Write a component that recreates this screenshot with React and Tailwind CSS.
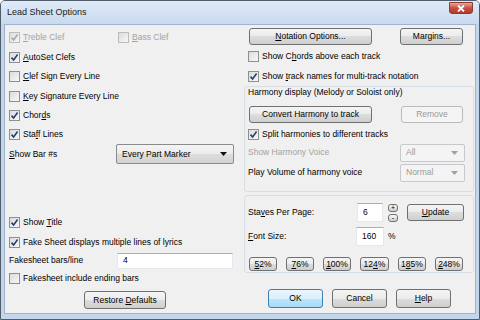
import React from "react";

const font = { fontFamily: '"Liberation Sans", Arial, sans-serif' };

const U = ({ children }) => <span className="underline underline-offset-[1px]">{children}</span>;

const Check = ({ checked, disabled }) => (
  <span
    className={`w-[11px] h-[11px] shrink-0 border flex items-center justify-center bg-[linear-gradient(135deg,#dcdcdc,#f7f7f7)] ${
      disabled ? "border-[#bcbcbc]" : "border-[#8e8f8f]"
    }`}
  >
    {checked && (
      <svg width="9" height="9" viewBox="0 0 9 9">
        <path
          d="M1.5 4.6 L3.6 7 L7.6 1.6"
          fill="none"
          stroke={disabled ? "#a9a9a9" : "#23406d"}
          strokeWidth="1.6"
        />
      </svg>
    )}
  </span>
);

const CheckRow = ({ checked, disabled, children, h = "h-[20px]", className = "" }) => (
  <div className={`flex items-center gap-[3px] ${h} ${className}`}>
    <Check checked={checked} disabled={disabled} />
    <span className={disabled ? "text-[#a3a3a3]" : "text-black"}>{children}</span>
  </div>
);

const Btn = ({ children, className = "", disabled, primary }) => (
  <div
    className={`flex items-center justify-center rounded-[3px] border ${
      disabled
        ? "border-[#b8bcbf] bg-[#f4f4f4] text-[#9a9a9a]"
        : primary
        ? "border-[#3c7fb1] bg-[linear-gradient(#eaf6fd,#d9f0fc_50%,#bee6fd_50%,#a7d9f5)] text-black"
        : "border-[#707070] bg-[linear-gradient(#f4f4f4,#ebebeb_50%,#dddddd_50%,#cfcfcf)] text-black"
    } ${className}`}
  >
    <span>{children}</span>
  </div>
);

const Arrow = ({ color }) => (
  <svg width="7" height="4" viewBox="0 0 7 4">
    <path d="M0 0 L7 0 L3.5 4 Z" fill={color} />
  </svg>
);

const Combo = ({ value, disabled, className = "" }) => (
  <div
    className={`flex items-center justify-between pl-[5px] pr-[6px] rounded-[2px] border ${
      disabled
        ? "border-[#c5c9cc] bg-[#f4f4f4] text-[#9a9a9a]"
        : "border-[#8a8a8a] bg-[linear-gradient(#f4f4f4,#ebebeb_50%,#dddddd_50%,#d3d3d3)] text-black"
    } ${className}`}
  >
    <span>{value}</span>
    <Arrow color={disabled ? "#a0a0a0" : "#111"} />
  </div>
);

const Input = ({ value, className = "" }) => (
  <div
    className={`flex items-center pl-[5px] bg-white border border-[#e3e9ef] border-t-[#abadb3] ${className}`}
  >
    {value}
  </div>
);

export default function App() {
  return (
    <div style={font} className="w-[480px] h-[320px] flex flex-col text-[8.5px] leading-none bg-[#c3d6ec] border border-[#4e5c6b] rounded-t-[5px] overflow-hidden">
      {/* Title bar */}
      <div className="h-[23px] shrink-0 flex items-center justify-between pl-[6px] pr-[6px] bg-[linear-gradient(#e0ebf7,#c8daef)]">
        <span className="text-[9px] text-[#1a1a1a] font-medium">Lead Sheet Options</span>
        <div className="w-[24px] h-[12px] -mt-[9px] rounded-b-[3px] border border-[#8a3b34] bg-[linear-gradient(#e5a79d,#c9503f_50%,#b83a26)] flex items-center justify-center">
          <svg width="8" height="7" viewBox="0 0 8 7">
            <path d="M1 0.5 L7 6.5 M7 0.5 L1 6.5" stroke="#fff" strokeWidth="1.8" />
          </svg>
        </div>
      </div>

      {/* Body */}
      <div className="flex-1 flex mx-[3px] mb-[5px] bg-[#f0f0f0] border border-[#9fb3ca]">
        {/* Left column */}
        <div className="w-[236px] shrink-0 flex flex-col pl-[4px] pt-[2px]">
          <div className="flex items-center h-[20px]">
            <CheckRow checked disabled className="w-[109px]">
              <U>T</U>reble Clef
            </CheckRow>
            <CheckRow disabled>
              <U>B</U>ass Clef
            </CheckRow>
          </div>
          <CheckRow checked>
            <U>A</U>utoSet Clefs
          </CheckRow>
          <CheckRow h="h-[19px]">
            <U>C</U>lef Sign Every Line
          </CheckRow>
          <CheckRow>
            <U>K</U>ey Signature Every Line
          </CheckRow>
          <CheckRow checked h="h-[19px]">
            Chor<U>d</U>s
          </CheckRow>
          <CheckRow checked h="h-[19px]">
            Sta<U>f</U>f Lines
          </CheckRow>
          <div className="flex items-center h-[20px]">
            <span className="w-[107px]">
              <U>S</U>how Bar #s
            </span>
            <Combo value="Every Part Marker" className="w-[118px] h-[20px]" />
          </div>
          <div className="h-[48px]" />
          <CheckRow checked>
            Show <U>T</U>itle
          </CheckRow>
          <CheckRow checked>Fake Sheet displays multiple lines of lyrics</CheckRow>
          <div className="flex items-center h-[17px]">
            <span className="w-[108px]">Fakesheet bars/line</span>
            <Input value="4" className="w-[116px] h-[16px]" />
          </div>
          <CheckRow h="h-[19px]">Fakesheet include ending bars</CheckRow>
          <Btn className="ml-[75px] mt-[3px] w-[82px] h-[18px]">
            Restore <U>D</U>efaults
          </Btn>
        </div>

        {/* Right column */}
        <div className="flex-1 flex flex-col pt-[3px]">
          <div className="flex items-center h-[17px] pl-[8px]">
            <Btn className="w-[123px] h-[17px]">
              <U>N</U>otation Options...
            </Btn>
            <Btn className="ml-[28px] w-[63px] h-[17px]">Margins...</Btn>
          </div>
          <CheckRow h="h-[19px]" className="mt-[2px] pl-[7px]">
            Show C<U>h</U>ords above each track
          </CheckRow>
          <CheckRow checked className="pl-[7px]">
            Show <U>t</U>rack names for multi-track notation
          </CheckRow>
          <div className="ml-[3px] mr-[1px] h-[106px] border border-[#d5dfe5] rounded-[3px] flex flex-col pl-[3px]">
            <div className="h-[11px] flex items-center">Harmony display (Melody or Soloist only)</div>
            <div className="flex items-center mt-[8px] h-[17px] pl-[1px]">
              <Btn className="w-[123px] h-[17px]">Convert Harmony to track</Btn>
              <Btn disabled className="ml-[29px] w-[62px] h-[17px]">
                Remove
              </Btn>
            </div>
            <CheckRow checked h="h-[18px]" className="mt-[2px]">
              Split harmonies to different tracks
            </CheckRow>
            <div className="flex items-center h-[19px]">
              <span className="w-[152px] text-[#a3a3a3]">Show Harmony Voice</span>
              <Combo disabled value="All" className="w-[65px] h-[18px]" />
            </div>
            <div className="flex items-center h-[19px] mt-[1px]">
              <span className="w-[152px]">Play Volume of harmony voice</span>
              <Combo disabled value="Normal" className="w-[65px] h-[18px]" />
            </div>
          </div>
          <div className="ml-[3px] mr-[1px] mt-[3px] h-[78px] border border-[#d5dfe5] rounded-[3px] flex flex-col pl-[3px] pt-[7px]">
            <div className="flex items-center h-[19px]">
              <span className="w-[109px]">
                Sta<U>v</U>es Per Page:
              </span>
              <Input value="6" className="w-[26px] h-[19px]" />
              <div className="ml-[5px] flex flex-col gap-[2px]">
                <Btn className="w-[10px] h-[8px] text-[7px]">+</Btn>
                <Btn className="w-[10px] h-[8px] text-[7px]">-</Btn>
              </div>
              <Btn className="ml-[9px] w-[57px] h-[17px]">
                <U>U</U>pdate
              </Btn>
            </div>
            <div className="flex items-center h-[19px] mt-[5px]">
              <span className="w-[108px]">
                <U>F</U>ont Size:
              </span>
              <Input value="160" className="w-[28px] h-[19px]" />
              <span className="ml-[4px]">%</span>
            </div>
            <div className="flex items-center gap-[9px] mt-[11px] pl-[1px]">
              <Btn className="w-[28px] h-[14px]"><U>5</U>2%</Btn>
              <Btn className="w-[28px] h-[14px]"><U>7</U>6%</Btn>
              <Btn className="w-[28px] h-[14px]"><U>1</U>00%</Btn>
              <Btn className="w-[29px] h-[14px]">12<U>4</U>%</Btn>
              <Btn className="w-[28px] h-[14px]">1<U>8</U>5%</Btn>
              <Btn className="w-[28px] h-[14px]"><U>2</U>48%</Btn>
            </div>
          </div>
          <div className="flex items-center gap-[9px] mt-[16px] pl-[27px]">
            <Btn primary className="w-[55px] h-[19px]">OK</Btn>
            <Btn className="w-[55px] h-[19px]">Cancel</Btn>
            <Btn className="w-[55px] h-[19px]"><U>H</U>elp</Btn>
          </div>
        </div>
      </div>
    </div>
  );
}
